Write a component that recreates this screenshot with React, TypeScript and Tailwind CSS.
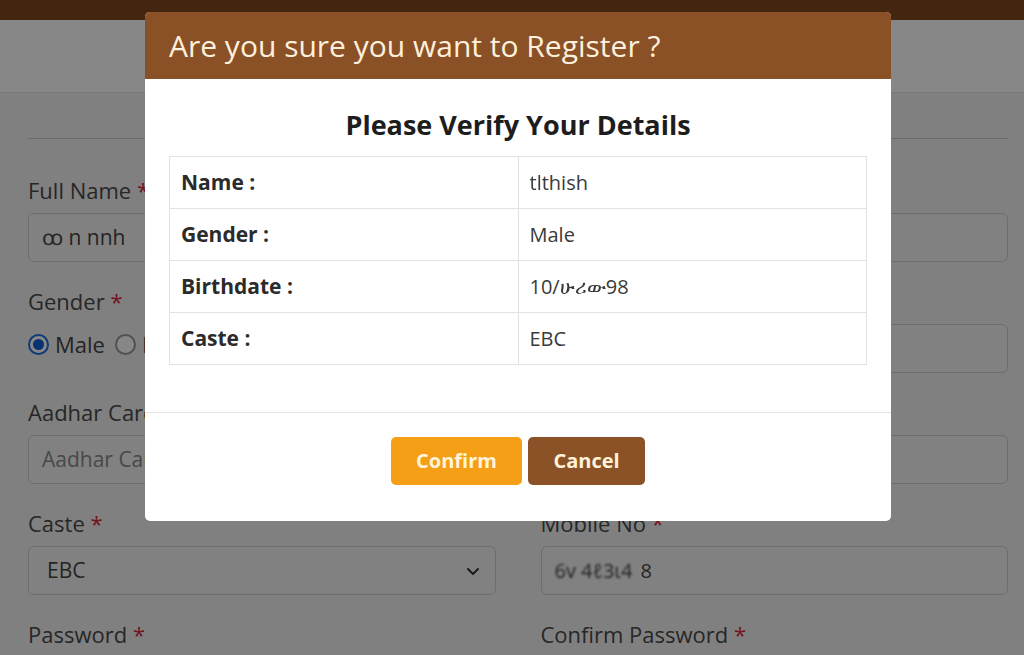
import React from "react";

const font = { fontFamily: '"Open Sans", "Liberation Sans", sans-serif' };

function Label({ text }: { text?: string }) {
  return (
    <p className="h-[27px] text-[22px] leading-[27px] text-[#4a4a4a]">
      {text ? (
        <>
          {text} <span className="text-[#d8263a]">*</span>
        </>
      ) : null}
    </p>
  );
}

function TextInput({ value, placeholder }: { value?: string; placeholder?: string }) {
  return (
    <div className="mt-[9px] flex h-[49px] items-center rounded-[6px] border border-[#cfcfcf] bg-[#f4f4f4] px-[13px] text-[21px]">
      {value ? (
        <span className="text-[#444]">{value}</span>
      ) : placeholder ? (
        <span className="text-[#8a8a8a]">{placeholder}</span>
      ) : null}
    </div>
  );
}

function Field({ label, value, placeholder }: { label?: string; value?: string; placeholder?: string }) {
  return (
    <div>
      <Label text={label} />
      <TextInput value={value} placeholder={placeholder} />
    </div>
  );
}

function Radio({ checked, label }: { checked?: boolean; label: string }) {
  return (
    <label className="flex items-center gap-[6px] text-[22px] text-[#444]">
      <span
        className={
          checked
            ? "flex h-[21px] w-[21px] items-center justify-center rounded-full border-2 border-[#1f6fe0] bg-white"
            : "h-[21px] w-[21px] rounded-full border-2 border-[#9a9a9a] bg-white"
        }
      >
        {checked ? <span className="h-[11px] w-[11px] rounded-full bg-[#0d5fd6]" /> : null}
      </span>
      {label}
    </label>
  );
}

function RegisterForm() {
  return (
    <div className="min-h-[655px] bg-[#f2f2f2]">
      <div className="h-[20px] bg-[#80461c]" />
      <div className="h-[73px] border-b border-[#e2e2e2] bg-white" />
      <div className="pl-[28px] pr-[16px]">
        <div className="mt-[45px] border-t border-[#c9c9c9]" />
        <div className="mt-[38px] grid grid-cols-2 gap-x-[45px] gap-y-[26px]">
          <Field label="Full Name" value="ꝏ n nnh" />
          <Field />

          <div>
            <Label text="Gender" />
            <div className="mt-[13px] flex items-center gap-[10px]">
              <Radio checked label="Male" />
              <Radio label="Female" />
            </div>
          </div>
          <Field />

          <Field label="Aadhar Card No" placeholder="Aadhar Card No" />
          <Field />

          <div>
            <Label text="Caste" />
            <div className="mt-[9px] flex h-[49px] items-center justify-between rounded-[6px] border border-[#cfcfcf] bg-[#f4f4f4] pl-[18px] pr-[14px] text-[21px] text-[#444]">
              <span>EBC</span>
              <svg width="16" height="16" viewBox="0 0 16 16" fill="none">
                <path d="M3 6l5 5 5-5" stroke="#333" strokeWidth="2" strokeLinecap="round" strokeLinejoin="round" />
              </svg>
            </div>
          </div>
          <div>
            <Label text="Mobile No" />
            <div className="mt-[9px] flex h-[49px] items-center rounded-[6px] border border-[#cfcfcf] bg-[#f4f4f4] px-[13px] text-[20px] text-[#444]">
              <span className="blur-[1px]">6v 4ℓ3ι4 </span>
              <span className="ml-[8px]">8</span>
            </div>
          </div>

          <Label text="Password" />
          <Label text="Confirm Password" />
        </div>
      </div>
    </div>
  );
}

const rows: { label: string; value: React.ReactNode }[] = [
  {
    label: "Name :",
    value: (
      <>
        <span className="blur-[0.6px]">tl</span>thish
      </>
    ),
  },
  { label: "Gender :", value: "Male" },
  {
    label: "Birthdate :",
    value: (
      <>
        10/<span className="blur-[0.6px]">ሁሪው</span>98
      </>
    ),
  },
  { label: "Caste :", value: "EBC" },
];

function ConfirmModal() {
  return (
    <div className="absolute left-[145px] top-[12px] w-[746px] overflow-hidden rounded-[5px] bg-white">
      <div className="flex h-[67px] items-center bg-[#8b5126] px-[24px]">
        <h2 className="text-[30px] leading-none text-[#fdf0dc]">Are you sure you want to Register ?</h2>
      </div>
      <div className="border-b border-[#e3e3e3] px-[24px] pb-[47px] pt-[30px]">
        <h3 className="text-center text-[27px] font-bold leading-[32px] text-[#1d1d1d]">
          Please Verify Your Details
        </h3>
        <table className="mt-[15px] w-full table-fixed border-collapse">
          <tbody>
            {rows.map((r) => (
              <tr key={r.label} className="h-[52px]">
                <td className="border border-[#e2e2e2] px-[11px] text-[21px] font-bold text-[#2b2b2b]">
                  {r.label}
                </td>
                <td className="border border-[#e2e2e2] px-[11px] text-[20px] text-[#3a3a3a]">{r.value}</td>
              </tr>
            ))}
          </tbody>
        </table>
      </div>
      <div className="flex justify-center gap-[6px] pb-[36px] pt-[24px]">
        <button className="h-[48px] w-[131px] rounded-[5px] bg-[#f49f16] text-[20px] font-bold text-[#fff3da]">
          Confirm
        </button>
        <button className="h-[48px] w-[117px] rounded-[5px] bg-[#8b5227] text-[20px] font-bold text-[#fff3da]">
          Cancel
        </button>
      </div>
    </div>
  );
}

export default function App() {
  return (
    <div className="relative h-[655px] w-[1024px] overflow-hidden" style={font}>
      <RegisterForm />
      <div className="absolute inset-0 bg-black/[0.47]" />
      <ConfirmModal />
    </div>
  );
}
